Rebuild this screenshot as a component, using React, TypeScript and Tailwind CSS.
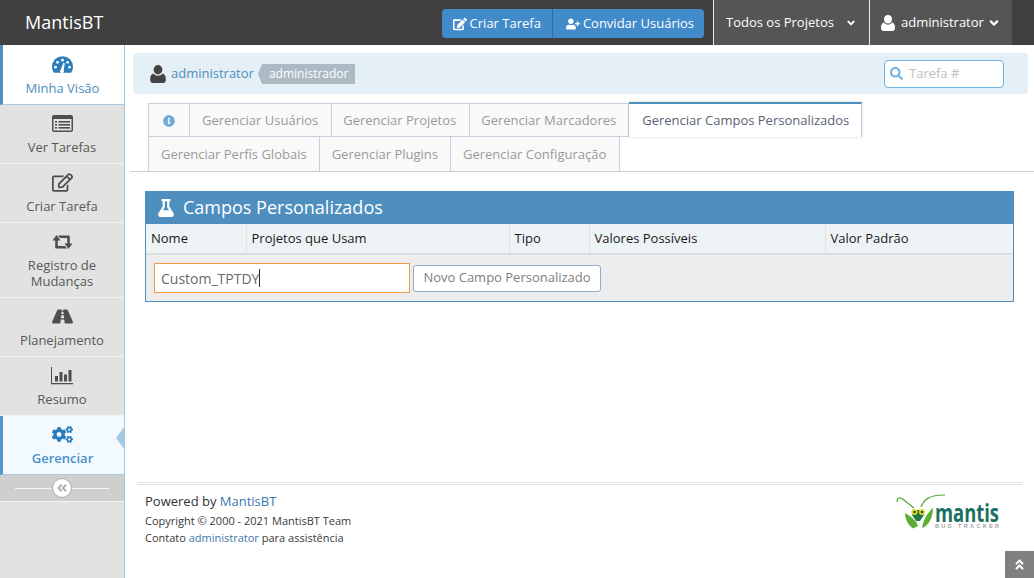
import React from "react";
import {
  FaRegEdit, FaEdit, FaRoad, FaCogs,
  FaAngleDoubleLeft, FaAngleDoubleUp, FaInfoCircle, FaUserPlus, FaFlask, FaSearch, FaAngleDown,
} from "react-icons/fa";

const font = "font-['Open_Sans',sans-serif]";

function Dashboard() {
  return (
    <svg width="21" height="17" viewBox="0 0 24 19">
      <path d="M2.2 19 C0.8 17 0 14.6 0 12 A12 12 0 0 1 24 12 C24 14.6 23.2 17 21.8 19 Z" fill="currentColor" />
      <g fill="#ffffff">
        <circle cx="4" cy="12.5" r="1.6" />
        <circle cx="6.3" cy="7" r="1.6" />
        <circle cx="12" cy="4.6" r="1.6" />
        <circle cx="17.8" cy="7" r="1.6" />
        <circle cx="20" cy="12.5" r="1.6" />
        <path d="M10 15.5 L13 7.5 L14.6 8 L13.4 16.2 A2.2 2.2 0 1 1 10 15.5 Z" />
      </g>
    </svg>
  );
}

function ListAlt() {
  return (
    <svg width="21" height="17" viewBox="0 0 21 17">
      <rect x="0" y="0" width="21" height="17" rx="2" fill="currentColor" />
      <rect x="1.5" y="4" width="18" height="11.5" fill="#e2e2e2" />
      <g fill="currentColor">
        <rect x="3" y="6" width="2" height="1.6" />
        <rect x="3" y="9" width="2" height="1.6" />
        <rect x="3" y="12" width="2" height="1.6" />
        <rect x="6.5" y="6" width="11.5" height="1.6" />
        <rect x="6.5" y="9" width="11.5" height="1.6" />
        <rect x="6.5" y="12" width="11.5" height="1.6" />
      </g>
    </svg>
  );
}

function Retweet() {
  return (
    <svg width="21" height="14" viewBox="0 0 21 14" fill="currentColor">
      <path d="M4.5 0 L8.5 5.5 H5.8 V11 H13 L15 13.5 H4.5 C3.7 13.5 3.2 13 3.2 12.2 V5.5 H0.5 Z" />
      <path d="M16.5 14 L12.5 8.5 H15.2 V3 H8 L6 0.5 H16.5 C17.3 0.5 17.8 1 17.8 1.8 V8.5 H20.5 Z" />
    </svg>
  );
}

function BarChart() {
  return (
    <svg width="22" height="18" viewBox="0 0 22 18" fill="currentColor">
      <rect x="0" y="0" width="1" height="17" />
      <rect x="0" y="16" width="22" height="1.3" />
      <rect x="4" y="9" width="3" height="5.5" />
      <rect x="8.5" y="5" width="3" height="9.5" />
      <rect x="13" y="7.5" width="3" height="7" />
      <rect x="17.5" y="3" width="3" height="11.5" />
    </svg>
  );
}

function UserIcon({ w, h, cls }: { w: number; h: number; cls?: string }) {
  return (
    <svg width={w} height={h} viewBox="0 0 14 16" fill="currentColor" className={cls}>
      <ellipse cx="7" cy="4.2" rx="3.9" ry="4.2" />
      <path d="M3 7.6 C4 9 5.4 9.6 7 9.6 C8.6 9.6 10 9 11 7.6 C13 8 14 9.8 14 13 C14 15 12.9 16 11.2 16 H2.8 C1.1 16 0 15 0 13 C0 9.8 1 8 3 7.6 Z" />
    </svg>
  );
}

function SideItem({ icon, label, active, current }: { icon: React.ReactNode; label: React.ReactNode; active?: boolean; current?: boolean }) {
  return (
    <div
      className={
        "relative flex flex-col items-center border-b text-center text-[13px] leading-[16px] " +
        (current
          ? "h-[59px] border-[#a5c9e2] border-l-[3px] border-l-[#4f99c6] bg-[#f2faff] pr-[2px] pt-[8px] font-semibold text-[#478fca]"
          : active
          ? "h-[60px] border-[#a5c9e2] border-l-[3px] border-l-[#4f8fbf] bg-white pr-[2px] pt-[9px] text-[#4c8fbd]"
          : "h-[59px] border-[#f2f2f2] bg-[#e2e2e2] pt-[8px] text-[#585858]")
      }
    >
      <div className={"flex h-[21px] items-center justify-center text-[21px] " + (current || active ? "text-[#2e7dbb]" : "text-[#4f4f4f]")}>{icon}</div>
      <div className="mt-[5px]">{label}</div>
      {current && (
        <div className="absolute right-0 top-[11px] h-0 w-0 border-y-[11px] border-r-[8px] border-y-transparent border-r-[#a5c9e2]" />
      )}
    </div>
  );
}

function Tab({ children, active, cls }: { children: React.ReactNode; active?: boolean; cls?: string }) {
  return (
    <div
      className={
        "flex items-center whitespace-nowrap border-r border-[#c5d0dc] text-[13px] " +
        (active
          ? "-mt-[1px] h-[35px] border-t-2 border-t-[#4c8fbd] bg-white pl-[13px] pr-3 text-[#576373] shadow-[0_0_2px_rgba(0,0,0,0.2)]"
          : "h-[34px] border-b bg-[#f9f9f9] px-3 pt-px text-[#999999] ") +
        " " + (cls ?? "")
      }
    >
      {children}
    </div>
  );
}

function Logo() {
  return (
    <svg width="126" height="42" viewBox="0 0 126 42" className="mr-[3px] mt-[5px]">
      <path d="M4 12 C4 7 7 7 11 10 L21 18" fill="none" stroke="#58a83a" strokeWidth="1.2" />
      <path d="M28 17 C31 10 35 5 52 5" fill="none" stroke="#58a83a" strokeWidth="1.2" />
      <path d="M20 20 L30 20 L31 25 L27 31 L23 31 L19 25 Z" fill="#1f7a4a" />
      <path d="M12 23 C17 26 24 31 25 36 L20 38.5 C15 35 12 29 12 23 Z" fill="#5cae35" />
      <path d="M40 18 C35 22 30 30 29 38 C35 36 40 28 40 18 Z" fill="#5cae35" />
      <circle cx="21.5" cy="22" r="3" fill="#e6dc28" />
      <circle cx="29" cy="22" r="3" fill="#e6dc28" />
      <circle cx="21.5" cy="22" r="1.2" fill="#2a3a10" />
      <circle cx="29" cy="22" r="1.2" fill="#2a3a10" />
      <text x="42" y="32" fontFamily="'Open Sans',sans-serif" fontWeight="700" fontSize="25" fill="#1a7060" textLength="64" lengthAdjust="spacingAndGlyphs">mantis</text>
      <text x="42" y="37.5" fontFamily="'Liberation Sans',sans-serif" fontWeight="700" fontSize="5.5" fill="#a0a0a0" textLength="64">BUG TRACKER</text>
    </svg>
  );
}

export default function App() {
  return (
    <div className={"relative flex h-[578px] w-[1034px] flex-col overflow-hidden bg-white " + font}>
      <header className="flex h-[45px] items-stretch bg-[#404040] pr-[22px] text-[13px] text-white">
        <div className="ml-[25px] flex flex-1 items-center text-[18px]">MantisBT</div>
        <div className="mr-[9px] mt-[9px] flex h-[29px] overflow-hidden rounded-[4px] bg-[#428bca] whitespace-nowrap">
          <div className="flex items-center gap-[3px] pl-[11px] pr-[11px]"><FaEdit className="text-[14px]" />Criar Tarefa</div>
          <div className="flex items-center gap-[3px] border-l border-[#2f6a9f] pl-[13px] pr-[10px]"><FaUserPlus className="text-[14px]" />Convidar Usuários</div>
        </div>
        <div className="flex w-[156px] items-center whitespace-nowrap border-l border-[#e8e8e8] bg-[#555555] pl-[12px] pr-[12px]">
          Todos os Projetos
          <FaAngleDown className="ml-auto text-[12px]" />
        </div>
        <div className="flex w-[143px] items-center whitespace-nowrap border-l border-[#e8e8e8] bg-[#555555] pl-[11px]">
          <UserIcon w={14} h={16} cls="mr-[6px]" />
          administrator
          <FaAngleDown className="ml-[3px] text-[14px]" />
        </div>
      </header>

      <div className="flex min-h-0 flex-1">
        <aside className="flex w-[125px] shrink-0 flex-col border-r border-[#a5c9e2] bg-[#e2e2e2]">
          <SideItem active icon={<Dashboard />} label="Minha Visão" />
          <SideItem icon={<ListAlt />} label="Ver Tarefas" />
          <SideItem icon={<FaRegEdit />} label="Criar Tarefa" />
          <div className="flex h-[75px] flex-col items-center border-b border-[#f2f2f2] bg-[#e2e2e2] pt-[8px] text-center text-[13px] leading-[16px] text-[#585858]">
            <div className="flex h-[21px] items-center justify-center text-[#4f4f4f]"><Retweet /></div>
            <div className="mt-[5px]">Registro de<br />Mudanças</div>
          </div>
          <SideItem icon={<FaRoad />} label="Planejamento" />
          <SideItem icon={<BarChart />} label="Resumo" />
          <SideItem current icon={<FaCogs />} label="Gerenciar" />
          <div className="relative flex h-[27px] items-center justify-center border-b border-[#f2f2f2] bg-[#cfcfcf]">
            <div className="h-px w-[94px] bg-[#f5f5f5]" />
            <div className="absolute left-1/2 top-[3px] flex h-[20px] w-[20px] -translate-x-1/2 items-center justify-center rounded-full border border-[#aaaaaa] bg-white text-[12px] text-[#aaaaaa]">
              <FaAngleDoubleLeft />
            </div>
          </div>
        </aside>

        <main className="flex min-w-0 flex-1 flex-col">
          <div className="ml-[8px] mr-[6px] mt-[8px] flex h-[41px] items-center rounded-[4px] bg-[#e4eff6] pl-[17px] pr-[24px] text-[13px]">
            <UserIcon w={16} h={18} cls="text-[#444444]" />
            <span className="ml-[5px] text-[#4c8fbd]">administrator</span>
            <span className="relative ml-[8px] flex h-[20px] items-center bg-[#abbac3] pl-[3px] pr-[7px] text-[12px] leading-none text-white">
              <span className="absolute -left-[4px] top-0 h-0 w-0 border-y-[10px] border-r-[4px] border-y-transparent border-r-[#abbac3]" />
              <span className="ml-[4px]">administrador</span>
            </span>
            <div className="ml-auto flex h-[28px] w-[120px] items-center rounded-[4px] border border-[#6fb3e0] bg-white pl-[5px] text-[13px] text-[#c0c0c0]">
              <FaSearch className="mr-[6px] text-[13px] text-[#6fb3e0]" />
              Tarefa #
            </div>
          </div>

          <div className="ml-[5px] mt-[9px] border-b border-[#c5d0dc] pl-[18px]">
            <div className="flex h-[34px] items-start">
              <Tab cls="border-l border-t w-[42px] justify-center !px-0"><FaInfoCircle className="text-[12px] text-[#6fa8d8]" /></Tab>
              <Tab cls="border-t !pr-[13px]">Gerenciar Usuários</Tab>
              <Tab cls="border-t !pl-[11px] !pr-[13px]">Gerenciar Projetos</Tab>
              <Tab cls="border-t !pl-[11px]">Gerenciar Marcadores</Tab>
              <Tab active>Gerenciar Campos Personalizados</Tab>
            </div>
            <div className="flex h-[34px] items-start">
              <Tab cls="border-l border-b-0">Gerenciar Perfís Globais</Tab>
              <Tab cls="border-b-0">Gerenciar Plugins</Tab>
              <Tab cls="border-b-0 !pr-[13px]">Gerenciar Configuração</Tab>
            </div>
          </div>

          <section className="ml-[20px] mr-[20px] mt-[19px] border border-[#4f8fc0]">
            <div className="flex h-[32px] items-center bg-[#4f8fc0] pb-[1px] pl-[11px] text-[18px] text-white">
              <FaFlask className="mr-[8px] text-[18px]" />
              Campos Personalizados
            </div>
            <table className="w-full table-fixed border-collapse text-left text-[13px]">
              <colgroup>
                <col className="w-[100px]" />
                <col className="w-[263px]" />
                <col className="w-[80px]" />
                <col className="w-[236px]" />
                <col />
              </colgroup>
              <thead>
                <tr className="h-[30px] border-b-2 border-[#dddddd] bg-[#eef3f6] text-[#1a1a1a]">
                  <th className="border-r border-[#dde3e8] pl-[5px] font-medium">Nome</th>
                  <th className="border-r border-[#dde3e8] pl-[5px] font-medium">Projetos que Usam</th>
                  <th className="border-r border-[#dde3e8] pl-[5px] font-medium">Tipo</th>
                  <th className="border-r border-[#dde3e8] pl-[5px] font-medium">Valores Possíveis</th>
                  <th className="pl-[5px] font-medium">Valor Padrão</th>
                </tr>
              </thead>
              <tbody>
                <tr className="bg-[#ededed]">
                  <td colSpan={5} className="h-[47px]">
                    <div className="flex items-center pl-[8px]">
                      <div className="flex h-[30px] w-[256px] items-center border border-[#f59942] bg-white pl-[6px] text-[14px] text-[#696969]">
                        Custom_TPTDY<span className="h-[18px] w-px bg-[#333333]" />
                      </div>
                      <div className="ml-[3px] flex h-[27px] w-[188px] items-center justify-center rounded-[3px] border border-[#8aafce] bg-white text-[13px] text-[#808080]">
                        Novo Campo Personalizado
                      </div>
                    </div>
                  </td>
                </tr>
              </tbody>
            </table>
          </section>

          <footer className="ml-[12px] mr-[12px] mt-auto flex h-[96px] items-start justify-between border-t-[3px] border-double border-[#e2e2e2] pl-[8px]">
            <div className="mt-[6px] text-[11px] leading-[17px] text-[#393939]">
              <div className="mb-[1px] text-[13px] font-medium leading-[20px] text-[#333333]">
                Powered by <span className="text-[#3a77ad]">MantisBT</span>
              </div>
              <div>Copyright © 2000 - 2021 MantisBT Team</div>
              <div>Contato <span className="text-[#3a77ad]">administrator</span> para assistência</div>
            </div>
            <Logo />
          </footer>
        </main>
      </div>

      <div className="absolute bottom-0 right-0 flex h-[27px] w-[29px] items-center justify-center bg-[#808080] text-[13px] text-white">
        <FaAngleDoubleUp />
      </div>
    </div>
  );
}
